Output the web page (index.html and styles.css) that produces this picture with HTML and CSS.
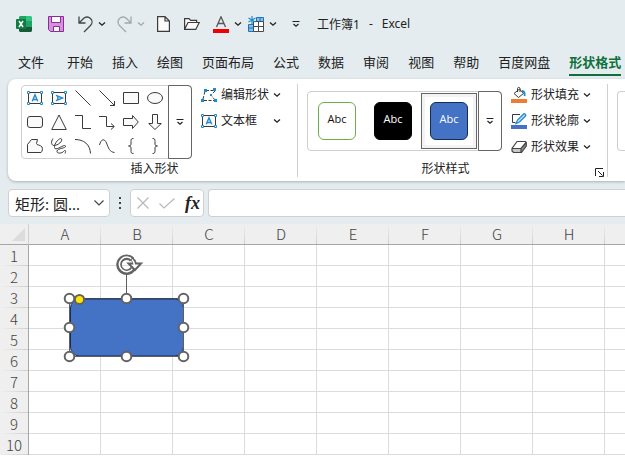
FILE: index.html
```
<!DOCTYPE html>
<html lang="zh-CN">
<head>
    <meta charset="UTF-8">
    <meta name="viewport" content="width=device-width, initial-scale=1.0">
    <title>工作簿1 - Excel</title>
    <link rel="stylesheet" href="styles.css">
</head>
<body>

<svg class="defs" aria-hidden="true">
    <symbol id="chevron" viewBox="0 0 8 6"><path d="M1 1.5 4 4.2 7 1.5" fill="none" stroke="currentColor" stroke-width="1.3"/></symbol>
    <symbol id="more" viewBox="0 0 8 8"><path d="M.5 1.5h7M1.5 4 4 6.3 6.5 4" fill="none" stroke="currentColor" stroke-width="1.2"/></symbol>
    <symbol id="textbox" viewBox="0 0 16 14">
        <path d="M1.5 1.5h13v11h-13z" fill="#fafafa" stroke="#3b3b3b"/>
        <path d="M.5.5h2v2h-2zM13.5.5h2v2h-2zM.5 11.5h2v2h-2zM13.5 11.5h2v2h-2z" fill="#fff" stroke="#1e8bcd"/>
        <path d="M5.300 10.200 8 3.800 10.700 10.200M6.300 8.500h3.400" fill="none" stroke="#1e8bcd" stroke-width="1.400"/>
    </symbol>
</svg>

<!-- 标题栏 -->
<header class="titlebar">
    <svg class="logo" width="16" height="16" viewBox="0 0 16 16">
        <path d="M4 0h6v5H3V1z" fill="#21a366"/><path d="M10 0h5l1 1v4h-6z" fill="#33c481"/>
        <path d="M3 5h7v6H3z" fill="#107c41"/><path d="M10 5h6v6h-6z" fill="#21a366"/>
        <path d="M3 11h13v4l-1 1H4l-1-1z" fill="#185c37"/>
        <rect y="3" width="10" height="10" rx="1" fill="#107c41"/>
        <path d="M3 5l4 6M7 5l-4 6" stroke="#fff" stroke-width="1.5"/>
    </svg>
    <button class="save" aria-label="保存">
        <svg width="16" height="16" viewBox="0 0 16 16"><path d="M.5.5h15v15h-13l-2-2z" fill="#d592dc" stroke="#8e2b9b"/><path d="M3.500.5h9v6h-9zM5.500 10.500h6v5h-6z" fill="#fafafa" stroke="#8e2b9b"/></svg>
    </button>
    <button class="undo" aria-label="撤消">
        <svg width="15" height="17" viewBox="0 0 15 17"><path d="M1 .5V7h6.500M1.500 6.500 5.500 2.500c2-2 5-2 7 0s2 5 0 7L6 16" fill="none" stroke="#444" stroke-width="1.300"/></svg>
        <svg class="chev" width="8" height="6"><use href="#chevron"/></svg>
    </button>
    <button class="redo" aria-label="恢复" disabled>
        <svg width="15" height="17" viewBox="0 0 15 17"><path d="M14 .5V7H7.500M13.500 6.500 9.500 2.500c-2-2-5-2-7 0s-2 5 0 7L9 16" fill="none" stroke="#a3a8aa" stroke-width="1.300"/></svg>
        <svg class="chev" width="8" height="6"><use href="#chevron"/></svg>
    </button>
    <button class="new" aria-label="新建">
        <svg width="13" height="16" viewBox="0 0 13 16"><path d="M.6.6H8l4.400 4.400v10.400H.6zM8 .6V5h4.400" fill="#fafafa" stroke="#3b3b3b" stroke-width="1.200"/></svg>
    </button>
    <button class="open" aria-label="打开">
        <svg width="16" height="12" viewBox="0 0 16 12"><path d="M.6 11.400V.6h4.500l1.500 1.800h6V4.500M.6 11.400 4 4.500h11.200l-3.400 6.900z" fill="#fafafa" stroke="#3b3b3b" stroke-width="1.200"/></svg>
    </button>
    <button class="font-color" aria-label="字体颜色">
        <svg width="16" height="17" viewBox="0 0 16 17"><path d="M3.500 11 8 .8 12.500 11M5 7.500h6" fill="none" stroke="#555" stroke-width="1.300"/><path d="M0 13h16v4H0z" fill="#f00000"/></svg>
        <svg class="chev" width="8" height="6"><use href="#chevron"/></svg>
    </button>
    <button class="freeze" aria-label="冻结窗格">
        <svg width="16" height="16" viewBox="0 0 16 16">
            <path d="M6 6h9.500v9.500H6z" fill="#fff"/>
            <path d="M8.500 1.500h7v4h-7zM.5 8.500h5v7h-5z" fill="#83beec" stroke="#1e74b8"/>
            <path d="M5.500 5.500h10v10h-10zM5.500 10.500h10M10.500 5.500v10" fill="none" stroke="#4a4a4a"/>
            <path d="M.5 12h5M12 1.500v4" stroke="#1e74b8"/>
            <path d="M4 0v8M.5 2l7 4M7.500 2l-7 4" stroke="#1e8bcd" stroke-width="1.200"/>
        </svg>
        <svg class="chev" width="8" height="6"><use href="#chevron"/></svg>
    </button>
    <button class="customize" aria-label="自定义快速访问工具栏"><svg width="8" height="8"><use href="#more"/></svg></button>
    <span class="doc-title"><span>工作簿1</span><span>-</span><span>Excel</span></span>
</header>

<!-- 选项卡 -->
<nav class="tabs">
    <a class="file" href="#">文件</a>
    <a href="#">开始</a>
    <a href="#">插入</a>
    <a href="#">绘图</a>
    <a href="#">页面布局</a>
    <a href="#">公式</a>
    <a href="#">数据</a>
    <a href="#">审阅</a>
    <a href="#">视图</a>
    <a href="#">帮助</a>
    <a href="#">百度网盘</a>
    <a class="active" href="#">形状格式</a>
</nav>

<!-- 功能区 -->
<section class="ribbon">
    <div class="group insert-shapes">
        <div class="group-body">
            <div class="gallery shapes">
                <div class="shape-grid">
                    <button aria-label="文本框"><svg width="16" height="14"><use href="#textbox"/></svg></button>
                    <button aria-label="竖排文本框"><svg width="16" height="14" viewBox="0 0 16 14"><path d="M1.500 1.500h13v11h-13z" fill="#fafafa" stroke="#3b3b3b"/><path d="M.5.5h2v2h-2zM13.500.5h2v2h-2zM.5 11.500h2v2h-2zM13.500 11.500h2v2h-2z" fill="#fff" stroke="#1e8bcd"/><path d="M5 4.300 11.500 7 5 9.700M6.800 5.300v3.400" fill="none" stroke="#1e8bcd" stroke-width="1.400"/></svg></button>
                    <button aria-label="直线"><svg width="16" height="16"><path d="M.5.5l15 15"/></svg></button>
                    <button aria-label="箭头"><svg width="16" height="16"><path d="M.5.5l15 15M15.500 11v4.500H11"/></svg></button>
                    <button aria-label="矩形"><svg width="16" height="12"><path d="M.5.5h15v11H.5z"/></svg></button>
                    <button aria-label="椭圆"><svg width="16" height="12"><ellipse cx="8" cy="6" rx="7.500" ry="5.500"/></svg></button>
                    <button aria-label="圆角矩形"><svg width="16" height="12"><rect x=".5" y=".5" width="15" height="11" rx="2.500"/></svg></button>
                    <button aria-label="三角形"><svg width="16" height="16"><path d="M8 1 15.300 15.500H.7z"/></svg></button>
                    <button aria-label="肘形连接符"><svg class="open-path" width="16" height="16"><path d="M0 1.500h7.500v13H16"/></svg></button>
                    <button aria-label="肘形箭头"><svg class="open-path" width="16" height="16"><path d="M0 2.500h7.500v10H15M12 9.500l3.300 3-3.300 3"/></svg></button>
                    <button aria-label="右箭头"><svg width="16" height="14"><path d="M.5 3.500h9v-3L15.300 7l-5.800 6.500v-3h-9z"/></svg></button>
                    <button aria-label="下箭头"><svg width="14" height="16"><path d="M4.500.5h5v9h3.800L7 15.500.7 9.500h3.800z"/></svg></button>
                    <button aria-label="任意多边形"><svg width="16" height="14"><path d="M.5 13.500v-8l4-5h6l-1 4c0 2 4 1 5.500 3.500.8 2 .5 4-1 5.500z"/></svg></button>
                    <button aria-label="自由曲线"><svg class="open-path" width="16" height="16"><path d="M2 .5C-.5 4 .5 7.500 3 7.500 7 7.500 12 3 10.500 1S3 5 3.500 9.500s10-4 11-1.500-8 2-8.500 5 5 2.500 6.500.5 3-1 1.500 2"/></svg></button>
                    <button aria-label="弧形"><svg class="open-path" width="16" height="16"><path d="M0 1.500c9 0 15 5 15.500 14"/></svg></button>
                    <button aria-label="曲线"><svg class="open-path" width="16" height="14"><path d="M.5 6c1.500-6 5-7 7-2s3 9 8 9.500"/></svg></button>
                    <button aria-label="左大括号"><svg class="open-path" width="6" height="16"><path d="M5.500.5C3 .5 3 1.500 3 3.500v2.500C3 7.500 2 8 .5 8 2 8 3 8.500 3 10v2.500c0 2 0 3 2.500 3"/></svg></button>
                    <button aria-label="右大括号"><svg class="open-path" width="6" height="16"><path d="M.5.5C3 .5 3 1.500 3 3.500v2.500c0 1.500 1 2 2.500 2C4 8 3 8.500 3 10v2.500c0 2 0 3-2.500 3"/></svg></button>
                </div>
                <button class="gallery-more" aria-label="其他形状"><svg width="8" height="8"><use href="#more"/></svg></button>
            </div>
            <div class="commands">
                <button>
                    <svg width="16" height="14" viewBox="0 0 16 14"><path d="M2 11 4 3M5 2.500h8M14 3l-4 4 4 5M3 12.500h10" fill="none" stroke="#3b3b3b" stroke-dasharray="3 1.500"/><path d="M3 1h3v3H3zM12 0h3v3h-3zM0 11h3v3H0zM13 11h3v3h-3zM9 6h2v2H9z" fill="#1e8bcd"/></svg>
                    <span>编辑形状</span>
                    <svg class="chev" width="8" height="6"><use href="#chevron"/></svg>
                </button>
                <button>
                    <svg width="16" height="14"><use href="#textbox"/></svg>
                    <span>文本框</span>
                    <svg class="chev" width="8" height="6"><use href="#chevron"/></svg>
                </button>
            </div>
        </div>
        <div class="group-label"><span>插入形状</span></div>
    </div>

    <div class="group shape-styles">
        <div class="group-body">
            <div class="gallery styles">
                <button class="swatch"><span class="outline-green">Abc</span></button>
                <button class="swatch"><span class="fill-black">Abc</span></button>
                <button class="swatch selected"><span class="fill-blue">Abc</span></button>
                <button class="gallery-more" aria-label="其他样式"><svg width="8" height="8"><use href="#more"/></svg></button>
            </div>
            <div class="commands">
                <button>
                    <svg width="16" height="16" viewBox="0 0 16 16"><path d="M0 12h16v4H0z" fill="#ed7d31"/><path d="M3 6.500 8.500 2l4 4.500-5 4z" fill="#fafafa" stroke="#3b3b3b"/><path d="M6.500 5V1.500c0-1.500 2.500-1.500 2.500 0V5" fill="none" stroke="#3b3b3b"/><path d="M11 4c2.500 0 3 2 2.500 5" fill="none" stroke="#1e8bcd" stroke-width="1.800"/></svg>
                    <span>形状填充</span>
                    <svg class="chev" width="8" height="6"><use href="#chevron"/></svg>
                </button>
                <button>
                    <svg width="16" height="16" viewBox="0 0 16 16"><path d="M0 12h16v4H0z" fill="#4472c4"/><path d="M9 1.500H1.500v8h3" fill="none" stroke="#3b3b3b"/><path d="M5 10.500 6.500 7l6-6c1-1 3 1 2 2l-6 6z" fill="#b5dcf5" stroke="#1e8bcd" stroke-width="1.200"/></svg>
                    <span>形状轮廓</span>
                    <svg class="chev" width="8" height="6"><use href="#chevron"/></svg>
                </button>
                <button>
                    <svg width="16" height="14" viewBox="0 0 16 14"><path d="M10 9.500 15 2v4l-5 6.500z" fill="#8a8a8a"/><path d="M1 8.500h9v4H2.500L1 11z" fill="#c8c8c8"/><path d="M6 1.500h8.500l.8 1V6L10.500 12.500h-8L1 11V8.500zM1 8.500h9v4M10 8.500l5-6" fill="none" stroke="#444" stroke-width="1.200"/></svg>
                    <span>形状效果</span>
                    <svg class="chev" width="8" height="6"><use href="#chevron"/></svg>
                </button>
            </div>
        </div>
        <div class="group-label">
            <span>形状样式</span>
            <button class="launcher" aria-label="设置形状格式"><svg width="9" height="9" viewBox="0 0 9 9"><path d="M.5 8V.5H8M3 3l4.500 4.500M8.500 4v4.500H4" fill="none" stroke="#222"/></svg></button>
        </div>
    </div>

    <div class="group next-group">
        <div class="group-body"><div class="gallery"></div></div>
    </div>
</section>

<!-- 编辑栏 -->
<section class="formula-bar">
    <div class="name-box">
        <input type="text" value="矩形: 圆..." aria-label="名称框">
        <button aria-label="展开名称框"><svg width="10" height="6" viewBox="0 0 10 6"><path d="M.5.5 5 5 9.500.5" fill="none" stroke="#444" stroke-width="1.200"/></svg></button>
    </div>
    <svg class="dots" width="2" height="12" viewBox="0 0 2 12"><path d="M0 0h2v2H0zM0 5h2v2H0zM0 10h2v2H0z" fill="#444"/></svg>
    <div class="entry-buttons">
        <button aria-label="取消" disabled><svg width="12" height="12" viewBox="0 0 12 12"><path d="M.5.5l11 11M11.500.5l-11 11" stroke="#b8b8b8" stroke-width="1.200"/></svg></button>
        <button aria-label="输入" disabled><svg width="16" height="11" viewBox="0 0 16 11"><path d="M.5 5.500 5 10 15.500.5" fill="none" stroke="#b8b8b8" stroke-width="1.200"/></svg></button>
        <button class="fx" aria-label="插入函数">fx</button>
    </div>
    <input class="formula" type="text" aria-label="编辑栏">
</section>

<!-- 工作表 -->
<main class="sheet">
    <table>
        <thead>
            <tr id="column-head">
                <th class="corner"><svg width="13" height="13" viewBox="0 0 13 13"><path d="M13 0v13H0z" fill="#dcdcdc"/></svg></th>
            </tr>
        </thead>
        <tbody id="sheet-body"></tbody>
    </table>
    <svg class="drawing" width="130" height="112" viewBox="0 0 130 112">
        <path d="M64.500 22v24M7.500 46.500h114v58H7.500z" fill="none" stroke="#5f5f5f"/>
        <rect x="8.500" y="47" width="113" height="57" rx="9" fill="#4472c4" stroke="#172c51"/>
        <path d="M121.500 47v57.500H8" fill="none" stroke="#5f5f5f"/>
        <g fill="none">
            <path d="M70 7.500A7.500 7.500 0 1 0 71 16.500" stroke="#636363" stroke-width="5.500"/>
            <path d="M70.500 8A7.300 7.300 0 1 0 71 16" stroke="#fff" stroke-width="1.500"/>
            <path d="M69.500 6.500c2 1.500 3 3 3.500 5.500" stroke="#636363" stroke-width="4"/>
            <path d="M66.500 11.500h12.500l-6 6.500z" fill="#fff" stroke="#636363" stroke-width="2"/>
            <path d="M70 7.500c1.500 1.500 2.300 3 2.500 6" stroke="#fff" stroke-width="1.500"/>
        </g>
        <g fill="#fff" stroke="#636363" stroke-width="2">
            <circle cx="7.500" cy="46.500" r="4.800"/>
            <circle cx="64.500" cy="46.500" r="4.800"/>
            <circle cx="121.500" cy="46.500" r="4.800"/>
            <circle cx="7.500" cy="75.500" r="4.800"/>
            <circle cx="121.500" cy="75.500" r="4.800"/>
            <circle cx="7.500" cy="104.500" r="4.800"/>
            <circle cx="64.500" cy="104.500" r="4.800"/>
            <circle cx="121.500" cy="104.500" r="4.800"/>
            <circle cx="17.500" cy="47.500" r="4.600" fill="#ffe600"/>
        </g>
    </svg>
</main>

<script>
    const columns = 'ABCDEFGH'.split('');
    const rowCount = 10;
    const head = document.getElementById('column-head');
    const body = document.getElementById('sheet-body');

    columns.forEach(name => {
        head.insertAdjacentHTML('beforeend', `<th class="col">${name}</th>`);
    });
    // 最后一列占满剩余宽度
    head.insertAdjacentHTML('beforeend', '<th class="rest"></th>');

    for (let i = 1; i <= rowCount; i++) {
        const row = document.createElement('tr');
        row.innerHTML = `<th class="row">${i}</th>` + columns.map(() => '<td></td>').join('') + '<td class="rest"></td>';
        body.appendChild(row);
    }
</script>

</body>
</html>
```
FILE: styles.css
```
* {
    box-sizing: border-box;
}
body {
    margin: 0;
    height: 100vh;
    display: flex;
    flex-direction: column;
    overflow: hidden;
    background: #e4ecef;
    color: #222;
    font-family: "Noto Sans", "Noto Sans CJK SC", sans-serif;
    font-size: 12px;
}
button {
    display: flex;
    align-items: center;
    padding: 0;
    border: none;
    background: none;
    color: inherit;
    font: inherit;
}
svg {
    display: block;
    flex: none;
}
.defs {
    position: absolute;
    width: 0;
    height: 0;
}

/* 标题栏 */
.titlebar {
    display: flex;
    align-items: center;
    flex: none;
    height: 48px;
    padding-left: 16px;
    white-space: nowrap;
}
.titlebar button {
    gap: 5px;
}
.save {
    margin-left: 16px;
}
.undo {
    margin-left: 14px;
}
.redo {
    margin-left: 11px;
}
.titlebar .redo {
    color: #a3a8aa;
}
.new {
    margin-left: 12px;
}
.open {
    margin-left: 14px;
}
.font-color {
    margin-left: 13px;
}
.freeze {
    margin-left: 6px;
}
.customize {
    margin-left: 15px;
}
.doc-title {
    display: flex;
    gap: 9px;
    margin-left: 17px;
}

/* 选项卡 */
.tabs {
    display: flex;
    flex: none;
    gap: 19px;
    height: 31px;
    padding-left: 18px;
    font-size: 13px;
    line-height: 28px;
    white-space: nowrap;
}
.tabs a {
    height: 28px;
    color: #222;
    text-decoration: none;
}
.tabs .file {
    margin-right: 4px;
}
.tabs .active {
    border-bottom: 2px solid #0f703b;
    color: #0f703b;
    font-weight: bold;
}

/* 功能区 */
.ribbon {
    display: flex;
    flex: none;
    margin-left: 8px;
    padding: 5px 0 4px;
    border-radius: 8px 0 0 8px;
    background: #fff;
    box-shadow: 0 1px 3px rgba(0, 0, 0, 0.25);
    overflow: hidden;
}
.group {
    display: flex;
    flex: none;
    flex-direction: column;
    border-right: 1px solid #d0d0d0;
}
.insert-shapes {
    padding-left: 13px;
    padding-right: 9px;
}
.insert-shapes .group-body {
    padding-right: 7px;
}
.shape-styles {
    padding-left: 9px;
    padding-right: 3px;
}
.shape-styles .group-body {
    padding-right: 13px;
}
.next-group {
    flex: 1;
    padding-left: 9px;
    border-right: none;
}
.group-body {
    display: flex;
    gap: 9px;
    height: 76px;
}
.group-label {
    display: flex;
    align-items: center;
    padding-top: 1px;
    line-height: 16px;
}
.group-label span {
    flex: 1;
    text-align: center;
}
.gallery {
    display: flex;
    border: 1px solid #cfcfcf;
    border-radius: 4px;
}
.shapes {
    height: 74px;
    margin-top: 1px;
}
.shape-grid {
    display: grid;
    grid-template-columns: repeat(6, 24px);
    grid-template-rows: repeat(3, 24px);
    padding: 0 2px 0 1px;
}
.shape-grid button {
    justify-content: center;
}
.shape-grid svg {
    fill: #fafafa;
    stroke: #3b3b3b;
}
.shape-grid .open-path {
    fill: none;
}
.gallery-more {
    justify-content: center;
    width: 24px;
    margin: -1px;
    border: 1px solid #666;
    border-radius: 0 4px 4px 0;
}
.commands {
    display: flex;
    flex-direction: column;
}
.commands button {
    gap: 4px;
    height: 26px;
    padding-bottom: 4px;
    line-height: 22px;
    white-space: nowrap;
}
.commands .chev {
    margin-left: auto;
}
.styles,
.next-group .gallery {
    height: 60px;
    margin-top: 7px;
}
.styles {
    padding: 0 2px 0 1px;
}
.styles .gallery-more {
    margin-right: -3px;
    margin-left: 1px;
}
.next-group .gallery {
    flex: 1;
    border-right: none;
    border-radius: 4px 0 0 4px;
}
.swatch {
    justify-content: center;
    width: 56px;
    height: 56px;
    margin-top: 1px;
}
.swatch span {
    width: 38px;
    height: 38px;
    border: 1px solid #000;
    border-radius: 6px;
    color: #fff;
    font-family: "Open Sans", sans-serif;
    font-size: 11px;
    line-height: 32px;
}
.swatch .outline-green {
    border-color: #70ad47;
    color: #111;
}
.swatch .fill-black {
    background: #000;
}
.swatch .fill-blue {
    border-color: #172c51;
    background: #4472c4;
}
.swatch.selected {
    border: 1px solid #666;
    box-shadow: inset 0 0 0 3px #f3f3f3;
}
.launcher {
    justify-content: flex-end;
    width: 20px;
    padding-top: 6px;
}

/* 编辑栏 */
.formula-bar {
    display: flex;
    align-items: center;
    flex: none;
    padding: 8px 0 7px 8px;
}
.formula-bar input {
    min-width: 0;
    border: none;
    outline: none;
    background: none;
    color: #222;
    font: inherit;
    font-size: 15px;
}
.name-box,
.entry-buttons,
.formula-bar .formula {
    height: 28px;
    border: 1px solid #d0d0d0;
    border-radius: 4px;
    background: #fff;
}
.name-box {
    display: flex;
    align-items: center;
    width: 102px;
    padding: 0 5px 0 6px;
}
.name-box input {
    flex: 1;
    padding: 0;
}
.dots {
    margin: 0 9px;
}
.entry-buttons {
    display: flex;
    align-items: center;
    gap: 10px;
    width: 74px;
    padding: 0 4px 0 6px;
}
.fx {
    font-family: "Liberation Serif", serif;
    font-size: 18px;
    font-style: italic;
    font-weight: bold;
    line-height: 24px;
}
.formula-bar .formula {
    flex: 1;
    margin-left: 4px;
    border-right: none;
    border-radius: 4px 0 0 4px;
}

/* 工作表 */
.sheet {
    position: relative;
    flex: 1;
    overflow: hidden;
    background: #fff;
}
table {
    table-layout: fixed;
    width: 100%;
    border-collapse: separate;
    border-spacing: 0;
}
th,
td {
    height: 21px;
    padding: 0;
    border-right: 1px solid #dcdcdc;
    border-bottom: 1px solid #dcdcdc;
}
th {
    background: #efefef;
    color: #444;
    font-family: "Noto Sans CJK SC", sans-serif;
    font-size: 15px;
    font-weight: 300;
    line-height: 20px;
}
.col {
    width: 72px;
    border-right: none;
    border-bottom-color: #a6a6a6;
    background: linear-gradient(#efefef, #cfcfcf) right / 1px 100% no-repeat #efefef;
}
.row {
    border-right-color: #a6a6a6;
    border-bottom: none;
    background: linear-gradient(to right, #efefef, #cfcfcf) bottom / 100% 1px no-repeat #efefef;
}
.corner {
    width: 29px;
    border-right-color: #cfcfcf;
    border-bottom-color: #a6a6a6;
}
.corner svg {
    margin-left: 12px;
}
.rest {
    border-right: none;
}
th.rest {
    border-bottom-color: #a6a6a6;
}
.drawing {
    position: absolute;
    left: 62px;
    top: 28px;
}
```
